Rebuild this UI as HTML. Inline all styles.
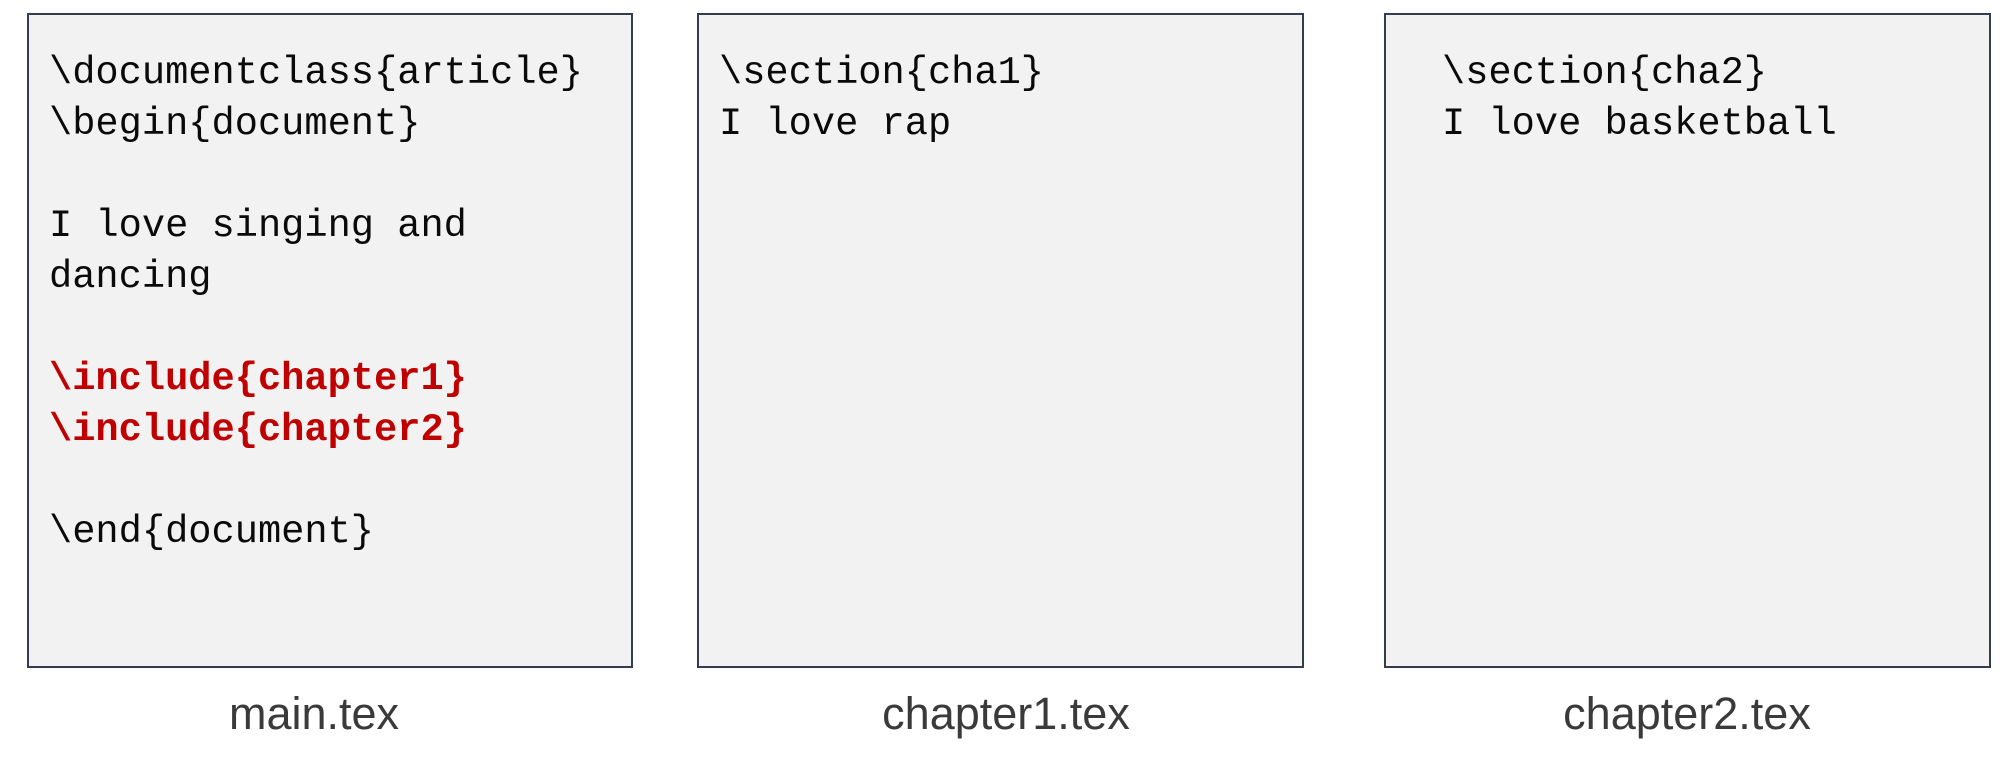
<!DOCTYPE html>
<html><head><meta charset="utf-8"><style>
html,body{margin:0;padding:0;background:#fff;width:2009px;height:758px;overflow:hidden;position:relative}
.box{position:absolute;top:13px;height:655px;background:#f2f2f2;border:2px solid #333d4f;box-sizing:border-box}
.code{position:absolute;font-family:"Liberation Mono",monospace;font-size:38.7px;line-height:51px;color:#0a0a0a;white-space:pre;margin:0}
.red{color:#c00000;font-weight:bold}
.lbl{position:absolute;top:688px;font-family:"Liberation Sans",sans-serif;font-size:45px;color:#3a3a3a;transform:translateX(-50%);white-space:nowrap}
</style></head><body>
<div class="box" style="left:27px;width:606px"></div>
<div class="box" style="left:697px;width:607px"></div>
<div class="box" style="left:1384px;width:607px"></div>
<pre class="code" style="left:49px;top:48px">\documentclass{article}
\begin{document}

I love singing and
dancing

<span class="red">\include{chapter1}
\include{chapter2}</span>

\end{document}</pre>
<pre class="code" style="left:719px;top:48px">\section{cha1}
I love rap</pre>
<pre class="code" style="left:1442px;top:48px">\section{cha2}
I love basketball</pre>
<div class="lbl" style="left:314px">main.tex</div>
<div class="lbl" style="left:1006px">chapter1.tex</div>
<div class="lbl" style="left:1687px">chapter2.tex</div>
</body></html>
